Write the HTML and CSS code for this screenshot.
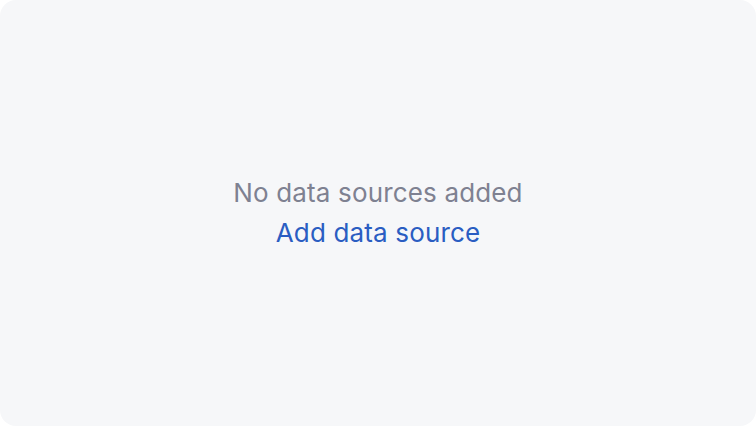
FILE: index.html
```html
<!DOCTYPE html>
<html lang="en">

<head>
    <meta charset="UTF-8">
    <meta name="viewport" content="width=device-width, initial-scale=1.0">
    <title>Data sources</title>
    <link rel="stylesheet" href="styles.css">
</head>

<body>
    <div class="empty-state">
        <p class="empty-text">No data sources added</p>
        <a class="add-link" href="#">Add data source</a>
    </div>
</body>

</html>
```

FILE: styles.css
```css
body {
    font-family: Inter, "Noto Sans", sans-serif;
    background-color: #fff;
    margin: 0;
    padding: 0;
}

.empty-state {
    height: 426px;
    box-sizing: border-box;
    background-color: #f6f7f9;
    border-radius: 16px;
    display: flex;
    flex-direction: column;
    justify-content: center;
    align-items: center;
    gap: 8px;
}

.empty-text {
    margin: 0;
    font-size: 26px;
    line-height: 32px;
    letter-spacing: 0.15px;
    color: #7e8191;
}

.add-link {
    font-size: 26px;
    line-height: 32px;
    letter-spacing: 0.15px;
    color: #2a5dc2;
    text-decoration: none;
}
```
